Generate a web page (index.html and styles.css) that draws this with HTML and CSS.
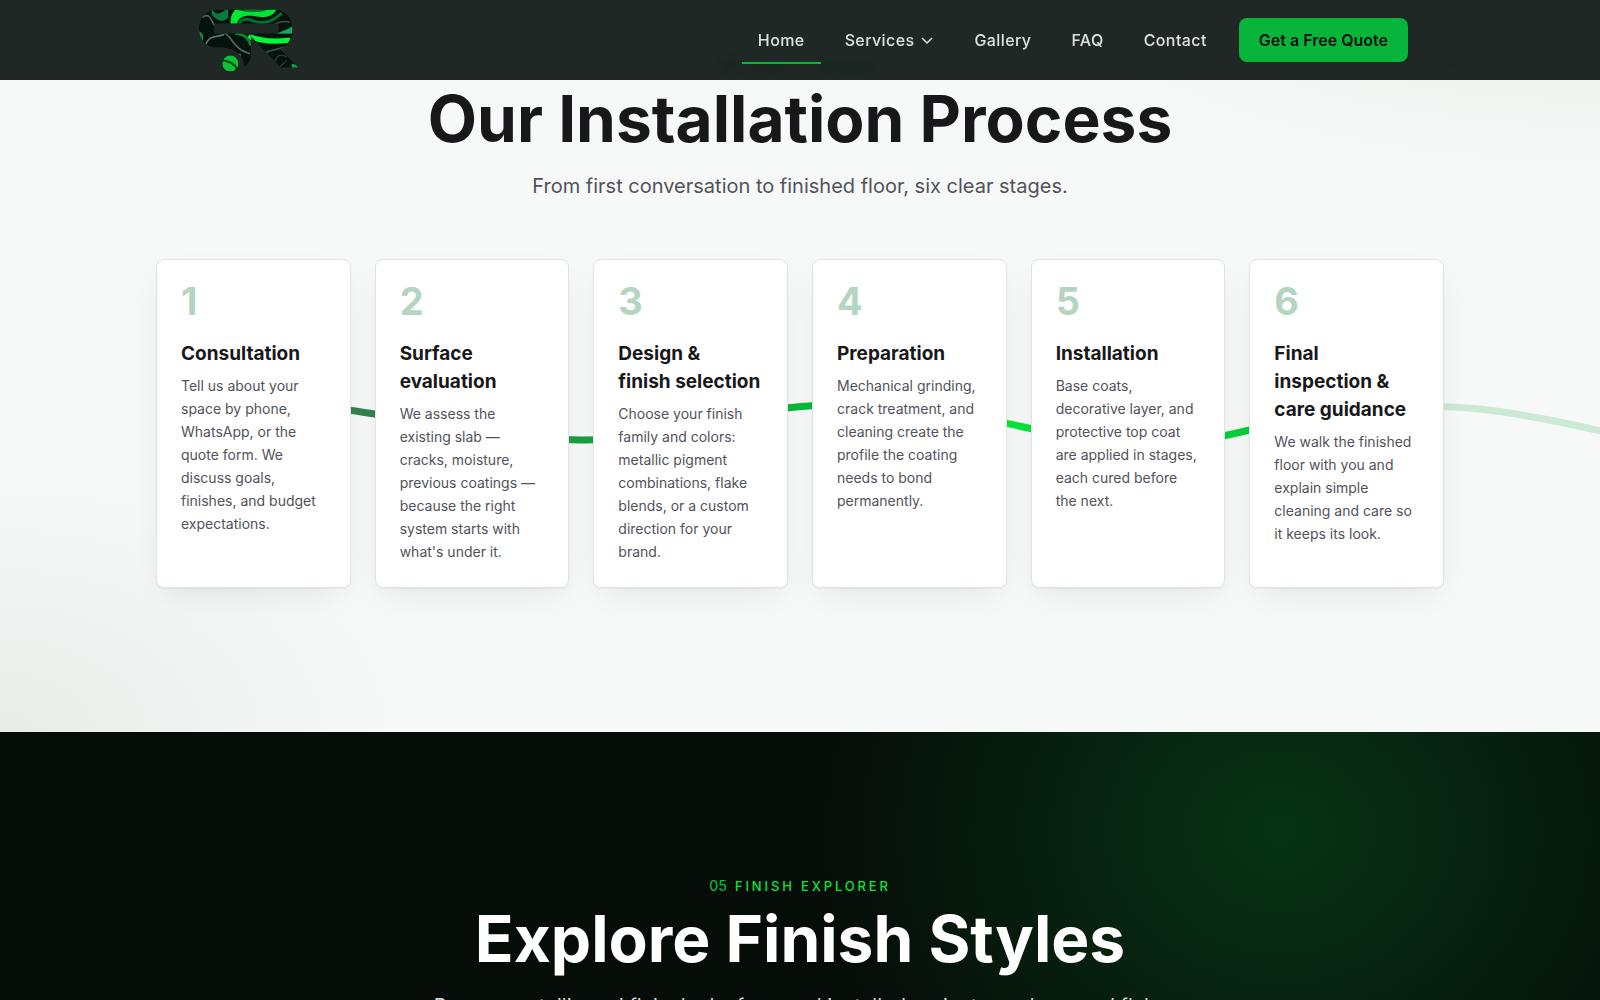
FILE: index.html
```
<!DOCTYPE html>
<html lang="en">

<head>
  <meta charset="UTF-8" />
  <meta name="viewport" content="width=device-width, initial-scale=1.0" />
  <title>Our Installation Process</title>
  <link rel="stylesheet" href="styles.css">
</head>

<body>
  <header class="site-header">
    <div class="header-inner">
      <a class="logo" href="#" aria-label="Home page">
        <svg class="logo-mark" viewBox="48 20 312 200" aria-hidden="true">
          <defs>
            <clipPath id="logo-shape">
              <path clip-rule="evenodd" d="M113 27H280C316 27 337 51 337 84C337 116 322 136 300 146L355 201H302L205 99H290Q297 92 297 84Q297 69 284 69H103V99H213V165C211 182 203 193 192 199C192 168 172 144 126 141H108C76 139 57 115 57 84C57 51 78 27 113 27Z" />
              <circle cx="151" cy="189" r="24" />
            </clipPath>
            <filter id="logo-soft"><feGaussianBlur stdDeviation="2" /></filter>
          </defs>
          <g clip-path="url(#logo-shape)">
            <rect x="48" y="20" width="312" height="200" fill="#06120d" />
            <g filter="url(#logo-soft)" fill="none">
              <path d="M95 20C105 50 125 40 145 20V50C130 70 105 60 95 40Z" fill="#087a3d" />
              <path d="M152 75C150 50 156 34 172 22H292C284 44 262 54 236 49C208 44 176 40 170 75Z" fill="#05e62f" />
              <path d="M176 26C200 32 240 36 262 24" stroke="#0a6b2a" stroke-width="6" />
              <path d="M178 75C178 55 198 52 222 62C255 74 280 60 305 38" stroke="#06702a" stroke-width="9" />
              <path d="M205 107C245 124 285 125 330 119" stroke="#04fb31" stroke-width="16" />
              <path d="M287 99C305 94 325 87 340 75V100Z" fill="#13a863" />
              <path d="M255 158C275 145 300 150 330 130M275 75C290 65 315 60 330 65" stroke="#38504a" stroke-width="5" />
              <path d="M66 50C87 38 90 50 100 69C116 96 130 86 150 112C172 145 184 150 210 160" stroke="#4e6b60" stroke-width="5" />
              <path d="M74 140C88 98 110 112 132 102" stroke="#5b786d" stroke-width="5" />
              <path d="M165 98C195 102 205 112 213 135" stroke="#07852f" stroke-width="9" />
              <path d="M58 92Q76 100 68 124L54 110Z" fill="#078b35" />
              <path d="M120 160H182V218H120Z" fill="#08c034" />
              <path d="M128 179C150 182 166 192 172 208" stroke="#064d1d" stroke-width="6" />
              <path d="M280 195Q292 150 320 170M300 198L320 180" stroke="#263d37" stroke-width="4" />
              <path d="M335 190L357 194V203H335Z" fill="#07a044" />
            </g>
          </g>
        </svg>
      </a>
      <nav class="main-nav" aria-label="Main">
        <a class="nav-link active" href="#">Home</a>
        <a class="nav-link" href="#">Services
          <svg class="chevron" viewBox="0 0 14 14" aria-hidden="true"><path d="M2 5l5 5 5-5" /></svg>
        </a>
        <a class="nav-link" href="#">Gallery</a>
        <a class="nav-link" href="#">FAQ</a>
        <a class="nav-link" href="#">Contact</a>
        <button class="quote-btn" type="button">Get a Free Quote</button>
      </nav>
    </div>
  </header>

  <main>
    <section class="process">
      <div class="section-head">
        <p class="eyebrow"><span class="eyebrow-num">04</span> How it works</p>
        <h2>Our Installation Process</h2>
        <p class="lead">From first conversation to finished floor, six clear stages.</p>
      </div>

      <div class="steps">
        <!-- Line running behind the cards -->
        <svg class="steps-line" viewBox="0 0 1600 100" preserveAspectRatio="none" aria-hidden="true">
          <defs>
            <linearGradient id="line-color" gradientUnits="userSpaceOnUse" x1="350" y1="0" x2="1440" y2="0">
              <stop offset="0" stop-color="#33814f" />
              <stop offset="0.2" stop-color="#1a9f44" />
              <stop offset="0.41" stop-color="#07ba3a" />
              <stop offset="0.61" stop-color="#05e63a" />
              <stop offset="0.81" stop-color="#06d03a" />
              <stop offset="1" stop-color="#07b53a" />
            </linearGradient>
          </defs>
          <path class="line-rest" d="M1400 34C1470 30 1530 42 1610 60" />
          <path class="line-done" d="M340 36C420 46 500 66 580 67S740 33 830 32C900 32 960 39 1019 53C1080 68 1170 77 1237 60C1290 47 1350 36 1400 34" />
        </svg>
        <ol class="step-list">
          <li class="step">
            <span class="step-num">1</span>
            <h3>Consultation</h3>
            <p>Tell us about your space by phone, WhatsApp, or the quote form. We discuss goals, finishes, and budget expectations.</p>
          </li>
          <li class="step">
            <span class="step-num">2</span>
            <h3>Surface evaluation</h3>
            <p>We assess the existing slab — cracks, moisture, previous coatings — because the right system starts with what's under it.</p>
          </li>
          <li class="step">
            <span class="step-num">3</span>
            <h3>Design &amp; finish&nbsp;selection</h3>
            <p>Choose your finish family and colors: metallic pigment combinations, flake blends, or a custom direction for your brand.</p>
          </li>
          <li class="step">
            <span class="step-num">4</span>
            <h3>Preparation</h3>
            <p>Mechanical grinding, crack treatment, and cleaning create the profile the coating needs to bond permanently.</p>
          </li>
          <li class="step">
            <span class="step-num">5</span>
            <h3>Installation</h3>
            <p>Base coats, decorative layer, and protective top coat are applied in stages, each cured before the&nbsp;next.</p>
          </li>
          <li class="step">
            <span class="step-num">6</span>
            <h3>Final inspection&nbsp;&amp; care guidance</h3>
            <p>We walk the finished floor with you and explain simple cleaning and care so it keeps its look.</p>
          </li>
        </ol>
      </div>
    </section>

    <section class="explorer">
      <div class="section-head">
        <p class="eyebrow"><span class="eyebrow-num">05</span> Finish Explorer</p>
        <h2>Explore Finish Styles</h2>
        <p class="lead">Browse metallic and flake looks from real installed projects, and see and flake blends up close.</p>
      </div>
    </section>
  </main>
</body>

</html>
```

FILE: styles.css
```
* {
  box-sizing: border-box;
}

body {
  margin: 0;
  font-family: Inter, "Liberation Sans", sans-serif;
  font-size: 16px;
  color: #18181b;
  background: #060d09;
}

h2,
h3,
p {
  margin: 0;
}

/* Header */
.site-header {
  position: fixed;
  top: 0;
  left: 0;
  right: 0;
  z-index: 10;
  background: rgba(6, 13, 11, 0.89);
  backdrop-filter: blur(6px);
}

.header-inner {
  display: flex;
  align-items: center;
  justify-content: space-between;
  height: 80px;
  max-width: 1280px;
  margin: 0 auto;
  padding: 0 32px;
}

.logo {
  display: flex;
  padding-left: 4px;
}

.logo-mark {
  width: 104px;
  height: 67px;
}

.main-nav {
  display: flex;
  align-items: center;
  gap: 8px;
}

.nav-link {
  display: flex;
  align-items: center;
  gap: 6px;
  height: 48px;
  padding: 0 16px;
  border-bottom: 2px solid transparent;
  border-top: 2px solid transparent;
  color: #dfe2e0;
  font-weight: 500;
  letter-spacing: 0.025em;
  text-decoration: none;
}

.nav-link.active {
  border-bottom-color: #07b53a;
}

.chevron {
  width: 14px;
  height: 14px;
  fill: none;
  stroke: currentColor;
  stroke-width: 1.5;
}

.quote-btn {
  height: 44px;
  margin-left: 8px;
  padding: 0 20px;
  border: 0;
  border-radius: 8px;
  background: #07b53a;
  color: #060d09;
  font: inherit;
  font-weight: 600;
}

/* Section headings */
.section-head {
  padding: 0 24px;
  text-align: center;
}

.eyebrow {
  display: flex;
  align-items: center;
  justify-content: center;
  gap: 8px;
  margin-bottom: 8px;
  font-size: 13px;
  font-weight: 500;
  line-height: 20px;
  letter-spacing: 0.22em;
  text-transform: uppercase;
  color: #05e63a;
}

.eyebrow-num {
  font-size: 14px;
  letter-spacing: 0;
  color: #07b53a;
}

h2 {
  font-size: 64px;
  font-weight: 700;
  line-height: 70px;
}

.lead {
  max-width: 740px;
  margin: 16px auto 0;
  font-size: 20px;
  line-height: 32px;
  color: #52525b;
}

/* Process */
.process {
  padding: 56px 0 144px;
  background:
    radial-gradient(620px 260px at 100% -88px, rgba(7, 120, 50, 0.1), transparent),
    radial-gradient(400px 250px at 0 100%, rgba(20, 70, 35, 0.07), transparent),
    #f7f9f8;
}

.steps {
  position: relative;
  margin-top: 57px;
}

.steps-line {
  position: absolute;
  top: calc(50% - 51px);
  left: 0;
  width: 100%;
  height: 100px;
  fill: none;
  stroke-width: 7;
}

.line-done {
  stroke: url(#line-color);
}

.line-rest {
  stroke: #cbe9d5;
}

.step-list {
  position: relative;
  display: grid;
  grid-template-columns: repeat(6, 1fr);
  gap: 24px;
  max-width: 1288px;
  margin: 0 auto;
  padding: 0;
  list-style: none;
}

.step {
  padding: 24px;
  border: 1px solid #e1e4e3;
  border-radius: 8px;
  background: #fff;
  box-shadow: 0 1px 2px rgba(6, 40, 25, 0.05), 0 12px 32px -12px rgba(6, 40, 25, 0.12);
}

.step-num {
  display: block;
  margin-bottom: 22px;
  font-size: 38px;
  font-weight: 700;
  line-height: 34px;
  color: #b4d5c0;
}

.step h3 {
  margin-bottom: 6px;
  font-size: 19px;
  font-weight: 700;
  line-height: 28px;
}

.step p {
  font-size: 14px;
  line-height: 23px;
  color: #52525b;
}

/* Finish explorer */
.explorer {
  padding: 144px 0;
  color: #fff;
  background: radial-gradient(460px 400px at 80% 100px, #073315, transparent), #060d09;
}

.explorer .lead {
  color: #d4d4d8;
}
```
